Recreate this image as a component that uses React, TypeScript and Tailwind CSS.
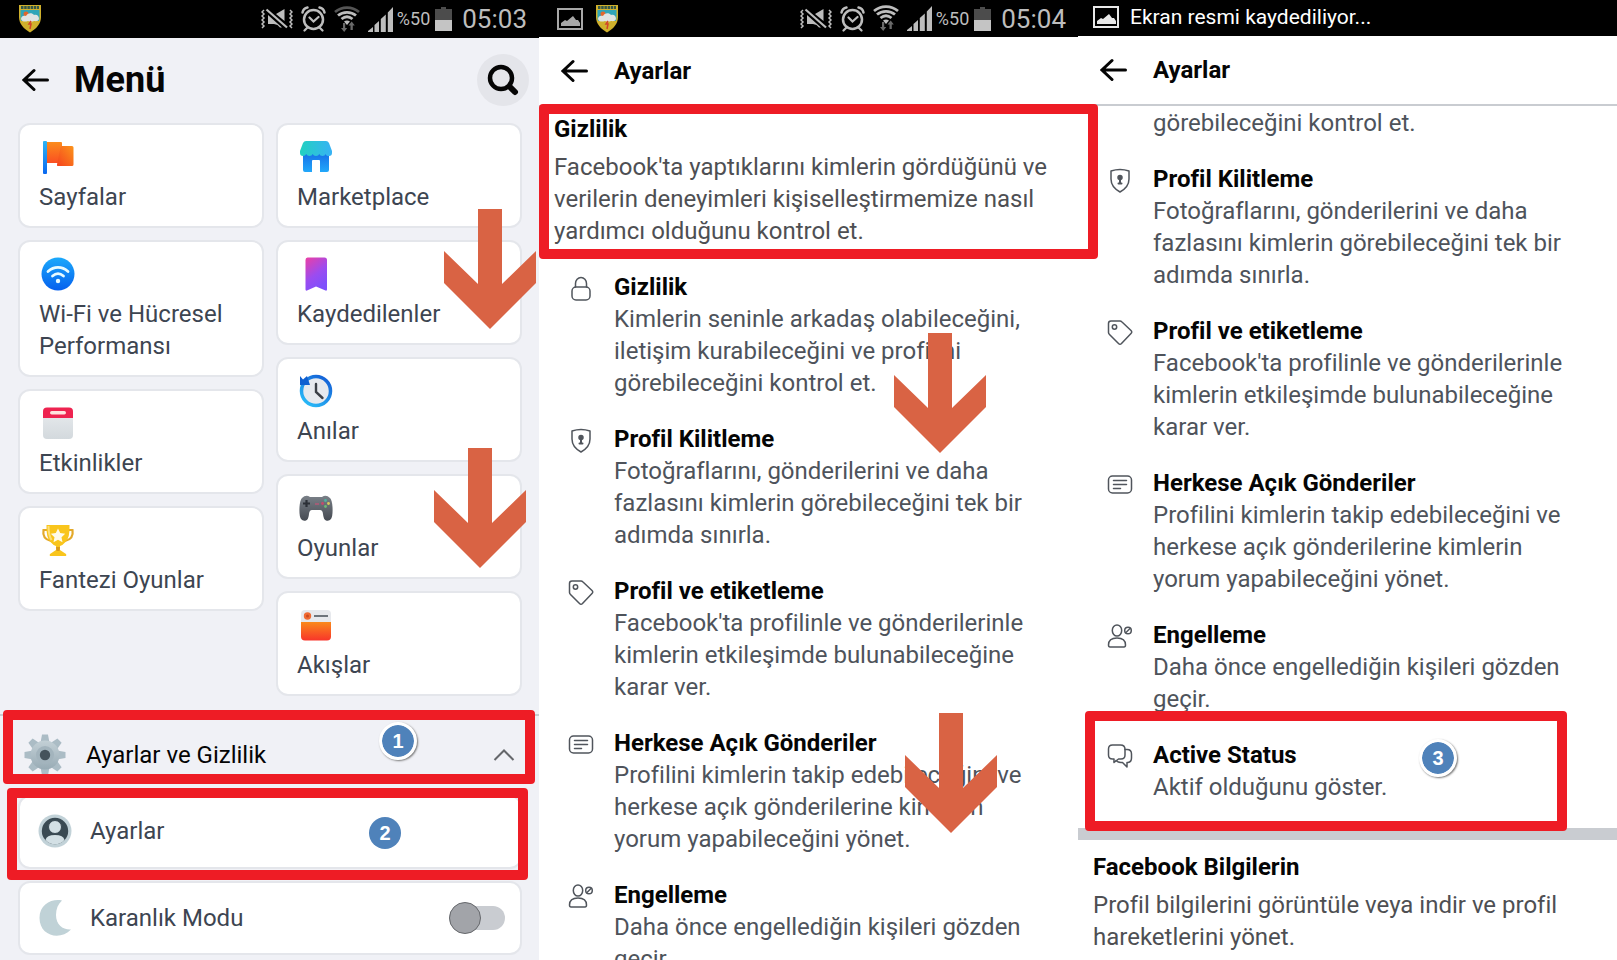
import type { ReactNode } from "react";

interface SettingItemProps {
  icon: ReactNode;
  title: string;
  text: string;
}

interface StatusBarProps {
  time: string;
  className: string;
  children?: ReactNode;
}

const ArrowLeftIcon = () => (
  <svg width="28" height="24" viewBox="0 0 28 24" fill="none" stroke="#050505" strokeWidth="3" strokeLinecap="round">
    <path d="M12 2.500 2 12l10 9.500M2.500 12H25.500" />
  </svg>
);

const ShieldLogo = () => (
  <svg width="24" height="28" viewBox="0 0 24 28">
    <path d="M1 0h22v12c0 7-5 12-11 15.500C6 24 1 19 1 12Z" fill="#cfb02c" />
    <path d="M2.500 5h19v8c0 1-.3 2-.7 3H3.200C2.700 15 2.500 14 2.500 13Z" fill="#2fa5b8" />
    <path d="M3 2.500h18" stroke="#33584a" strokeWidth="3" strokeDasharray="2.500 .7" />
    <circle cx="8" cy="9" r="2.500" fill="#e0662c" />
    <path d="M3 14c0-3 3-4 5-3 1-3 6-4 8-1 3-1 5 1 5 4-1 3-4 2-5 2-2 1-4 1-6 0-3 1-6 1-7-2Z" fill="#dfe3e2" />
    <path d="m13 16-2 3h2l-1 5" stroke="#d2432a" strokeWidth="1.500" fill="none" />
  </svg>
);

const PictureIcon = ({ color }: { color: string }) => (
  <svg width="26" height="22" viewBox="0 0 26 22">
    <path d="M1 1h24v20H1Z" fill="none" stroke={color} strokeWidth="2" />
    <path d="M4 18v-3l4-3 2 1 6-5 3 4h2l2 3v3Z" fill={color} />
  </svg>
);

const VibrateOffIcon = () => (
  <svg width="32" height="22" viewBox="0 0 32 22" fill="none" stroke="#bdbdbd">
    <path d="m3 2-2 2 2 2-2 2 2 2-2 2 2 2-2 2 2 2-2 2M29 2l2 2-2 2 2 2-2 2 2 2-2 2 2 2-2 2 2 2" strokeWidth="1.500" />
    <path d="M5.500 1.500 26 19.500" strokeWidth="2.200" />
    <path d="M15 6 23.500 1v12ZM7 7l14 12.500H19L16.500 17 13 16H7Z" fill="#bdbdbd" stroke="none" />
  </svg>
);

const AlarmIcon = () => (
  <svg width="25" height="26" viewBox="0 0 25 26" fill="none" stroke="#bdbdbd" strokeLinecap="round">
    <circle cx="12.500" cy="13.500" r="9.500" strokeWidth="2.500" />
    <path d="M1.500 6.500C2 4 4 2 6.500 1.500M23.500 6.500C23 4 21 2 18.500 1.500" strokeWidth="2.500" />
    <path d="m8.500 11.500 4 4 5-4.500M6 22l-2.500 2.500M19 22l2.500 2.500" strokeWidth="2.200" />
  </svg>
);

const WifiIcon = ({ weak }: { weak: boolean }) => (
  <svg width="26" height="27" viewBox="0 0 26 27" fill="none">
    <path d="M1 6C8 .2 18 .2 25 6" stroke={weak ? "#555555" : "#bdbdbd"} strokeWidth="2.800" />
    <path d="M4 9.500c5-4.300 13-4.300 18 0M7.500 13c3.500-2.800 7.500-2.800 11 0" stroke="#bdbdbd" strokeWidth="2.800" />
    <path d="M10 15.500c2-1.500 4-1.500 6 0L13 19Z" fill="#bdbdbd" />
    <path d="M9 17v5H7l3.200 4 3-4h-2v-5ZM16.500 24v-4.500h-2l3.200-4 3.100 4h-2V24Z" fill="#6a6a6a" />
  </svg>
);

const SignalIcon = () => (
  <svg width="25" height="25" viewBox="0 0 25 25" fill="#bdbdbd">
    <path d="M0 25v-1l5-4v5ZM6.500 25v-7l4.500-4v11ZM12.800 25V12l5-4.500V25ZM19.800 25V5.500L25 0v25Z" />
  </svg>
);

const BatteryIcon = () => (
  <svg width="17" height="24" viewBox="0 0 17 24">
    <path d="M6 0h5v2h6v11H0V2h6Z" fill="#4c4c4c" />
    <path d="M0 13h17v11H0Z" fill="#c4c4c4" />
  </svg>
);

const DownArrow = ({ className }: { className: string }) => (
  <svg className={`absolute z-20 ${className}`} width="92" height="120" viewBox="0 0 92 120">
    <path d="M34 0h24v75l34-33v32L46 120 0 74V42l34 33Z" fill="#d96344" />
  </svg>
);

const HighlightBox = ({ className }: { className: string }) => (
  <div className={`pointer-events-none absolute z-10 rounded-[4px] border-10 border-[#ee1c25] ${className}`} />
);

const StepBadge = ({ step, className }: { step: number; className: string }) => (
  <span
    className={`absolute z-20 flex size-[38px] items-center justify-center rounded-full border-3 font-['Liberation_Sans',sans-serif] text-xl font-bold text-white bg-[#4f82ba] bg-clip-padding ${className}`}
  >
    {step}
  </span>
);

const MenuIcon = ({ children }: { children: ReactNode }) => (
  <svg width="38" height="36" viewBox="1 0 38 36" fill="none">
    {children}
  </svg>
);

const FlagIcon = () => (
  <MenuIcon>
    <defs>
      <linearGradient id="flagA" x1="0" y1="0" x2="0" y2="1">
        <stop stopColor="#fb8c1c" />
        <stop offset="1" stopColor="#fa4f22" />
      </linearGradient>
      <linearGradient id="flagB" x1="0" y1="1" x2="1" y2="0">
        <stop stopColor="#f5421e" />
        <stop offset="1" stopColor="#fb941b" />
      </linearGradient>
      <linearGradient id="pole" x1="0" y1="0" x2="0" y2="1">
        <stop stopColor="#2cb5f5" />
        <stop offset="1" stopColor="#0a68f0" />
      </linearGradient>
    </defs>
    <path d="M8 3h15q1 0 1 1v20H8Z" fill="url(#flagA)" />
    <path d="M24 7h10q1.500 0 1.500 1.500v17q0 1.500-1.500 1.500H20q-1.500 0-1-1.500L22.500 8.500Q23 7 24 7Z" fill="url(#flagB)" />
    <rect x="5" y="2" width="4" height="33" rx="1" fill="url(#pole)" />
  </MenuIcon>
);

const MarketIcon = () => (
  <MenuIcon>
    <defs>
      <linearGradient id="roof" x1="0" y1="0" x2="1" y2="0">
        <stop stopColor="#22d1c0" />
        <stop offset="1" stopColor="#38b2f5" />
      </linearGradient>
      <linearGradient id="shop" x1="0" y1="0" x2="0" y2="1">
        <stop stopColor="#1772e8" />
        <stop offset="1" stopColor="#22a8fa" />
      </linearGradient>
    </defs>
    <path d="M7 15h26v16q0 2-2 2h-7V22q0-1-1-1h-6q-1 0-1 1v11H9q-2 0-2-2Z" fill="url(#shop)" />
    <path
      d="M10 2h20q2 0 3 2l3 8v2q0 3-3 3t-3.200-2q-.8 2-3.300 2t-3.200-2q-.8 2-3.300 2t-3.300-2q-.8 2-3.200 2T10.200 15q-.8 2-3.200 2-3 0-3-3v-2l3-8q1-2 3-2Z"
      fill="url(#roof)"
    />
  </MenuIcon>
);

const WifiCircleIcon = () => (
  <MenuIcon>
    <defs>
      <linearGradient id="wifiBg" x1="0" y1="0" x2="0" y2="1">
        <stop stopColor="#1ba9fb" />
        <stop offset="1" stopColor="#0560ee" />
      </linearGradient>
    </defs>
    <circle cx="20" cy="18" r="16.500" fill="url(#wifiBg)" />
    <path d="M10 15.500c6-5.500 14-5.500 20 0M14.500 20c3.500-3 7.500-3 11 0" stroke="#e8fbff" strokeWidth="2.800" strokeLinecap="round" />
    <circle cx="20" cy="25" r="2.200" fill="#e8fbff" />
  </MenuIcon>
);

const BookmarkIcon = () => (
  <MenuIcon>
    <defs>
      <linearGradient id="mark" x1="0" y1="0" x2=".5" y2="1">
        <stop stopColor="#ec3fa4" />
        <stop offset=".6" stopColor="#9b4cf0" />
        <stop offset="1" stopColor="#7f50fb" />
      </linearGradient>
    </defs>
    <path d="M11.500 1.500h17q2.500 0 2.500 2.500v29.500q0 1.500-1.500 1L20 30.500l-9 4q-1.500.5-1.500-1V4q0-2.500 2-2.500Z" fill="url(#mark)" />
  </MenuIcon>
);

const MemoriesIcon = () => (
  <MenuIcon>
    <defs>
      <linearGradient id="ring" x1="0" y1="1" x2=".7" y2="0">
        <stop stopColor="#2bc4fb" />
        <stop offset="1" stopColor="#1565d8" />
      </linearGradient>
    </defs>
    <circle cx="20" cy="18" r="14.500" fill="#e6e9ee" stroke="url(#ring)" strokeWidth="3.500" />
    <path d="m4 3 3 3.500L11 3l3 9H4Z" fill="#0f5fd0" />
    <path d="M20 11v8l6.500 6" stroke="#3b3f46" strokeWidth="2.400" strokeLinecap="round" />
  </MenuIcon>
);

const CalendarIcon = () => (
  <MenuIcon>
    <defs>
      <linearGradient id="sheet" x1="0" y1="0" x2="0" y2="1">
        <stop stopColor="#e9ecef" />
        <stop offset="1" stopColor="#d3d9dd" />
      </linearGradient>
    </defs>
    <rect x="5" y="3" width="30" height="31" rx="4" fill="url(#sheet)" />
    <path d="M9 2.500h22q4 0 4 4V13H5V6.500q0-4 4-4Z" fill="#ee2350" />
    <rect x="12" y="6" width="16" height="3.500" rx="1.700" fill="#ffe3df" />
  </MenuIcon>
);

const TrophyIcon = () => (
  <MenuIcon>
    <path d="M10 8H5.500Q4 17 13 19M30 8h4.500q1.500 9-7.500 11" stroke="#e3a92a" strokeWidth="2.200" strokeLinecap="round" />
    <path d="M8.500 3h23q.5 13-4 17-2.500 3-5.500 4v4l6 4q1 2-1 2H13q-2 0-1-2l6-4v-4q-3-1-5.500-4-4.500-4-4-17Z" fill="#f9c51c" />
    <path d="M18 25h4l-.5 4h-3Z" fill="#d99a1e" />
    <path d="M10.500 4q0 9 3 14" stroke="#fde07a" strokeWidth="2" />
    <path d="m20 6.500 2.200 4.600 5 .6-3.700 3.500 1 5-4.500-2.500-4.500 2.500 1-5-3.700-3.500 5-.6Z" fill="#fffbea" />
  </MenuIcon>
);

const GamepadIcon = () => (
  <MenuIcon>
    <defs>
      <linearGradient id="pad" x1="0" y1="0" x2="0" y2="1">
        <stop stopColor="#7a8088" />
        <stop offset="1" stopColor="#454a52" />
      </linearGradient>
    </defs>
    <path
      d="M6 8q4-4 8-1h12q4-3 8 1 2 2 2.500 9 .5 9-1.500 12-2 2.500-5 1.500-2.500-1-3-6.500-.4-4-3-4h-8q-2.600 0-3 4-.5 5.500-3 6.500-3 1-5-1.500-2-3-1.500-12Q4 10 6 8Z"
      fill="url(#pad)"
    />
    <path d="M10.500 10v7M7 13.500h7" stroke="#2c3037" strokeWidth="2.200" />
    <path d="M19 14h4" stroke="#c05578" strokeWidth="1.300" />
    <circle cx="29.500" cy="10.500" r="1.400" fill="#4fb3a0" />
    <circle cx="32.500" cy="13.500" r="1.400" fill="#d9ca5b" />
    <circle cx="29.500" cy="16.500" r="1.400" fill="#6cba74" />
    <circle cx="26.500" cy="13.500" r="1.400" fill="#c8496c" />
  </MenuIcon>
);

const FeedsIcon = () => (
  <MenuIcon>
    <defs>
      <linearGradient id="feed" x1="0" y1="0" x2="0" y2="1">
        <stop stopColor="#fa8a1c" />
        <stop offset="1" stopColor="#f8352a" />
      </linearGradient>
    </defs>
    <path d="M9 3h22q4 0 4 4v8H5V7q0-4 4-4Z" fill="#e7e9ed" />
    <path d="M5 15h30v14.500q0 4-4 4H9q-4 0-4-4Z" fill="url(#feed)" />
    <circle cx="11.500" cy="9" r="3.700" fill="#f06a32" />
    <circle cx="11.500" cy="9" r="1.500" fill="#c94a22" />
    <path d="M18 9h14" stroke="#6e757c" strokeWidth="2" />
  </MenuIcon>
);

const GearIcon = () => (
  <svg width="42" height="42" viewBox="-21 -21 42 42">
    <defs>
      <linearGradient id="gear" x1="0" y1="0" x2="0" y2="1">
        <stop stopColor="#c3d0d6" />
        <stop offset="1" stopColor="#98abb5" />
      </linearGradient>
    </defs>
    {[0, 45, 90, 135, 180, 225, 270, 315].map((angle) => (
      <path key={angle} d="M-4.500-12-3-20.500h6L4.500-12Z" fill="#abbcc5" transform={`rotate(${angle})`} />
    ))}
    <circle r="14.500" fill="url(#gear)" />
    <circle r="9" fill="#a3b4bd" />
    <circle r="5.200" fill="#45535c" />
  </svg>
);

const AccountIcon = () => (
  <svg width="34" height="34" viewBox="0 0 34 34">
    <circle cx="17" cy="17" r="16.500" fill="#c2d2d8" />
    <circle cx="17" cy="17" r="13.200" fill="#3a4a53" />
    <path d="M7.500 26q1-5 9.500-5t9.500 5q-4 4.300-9.500 4.300T7.500 26Z" fill="#d3e0e5" />
    <circle cx="17" cy="13" r="6.500" fill="#d3e0e5" stroke="#3a4a53" />
  </svg>
);

const MoonIcon = () => (
  <svg width="34" height="38" viewBox="0 0 34 38">
    <path d="M24 1.500C14-.5 1.500 5 1.500 19 1.500 37 22 42 33 30.500 25 31 18 26 18 16c0-6 2-11 6-14.500Z" fill="#c0d2d7" />
  </svg>
);

const LineIcon = ({ children }: { children: ReactNode }) => (
  <svg
    className="mt-[3px] shrink-0"
    width="28"
    height="28"
    viewBox="0 0 28 28"
    fill="none"
    stroke="#50555c"
    strokeWidth="1.500"
    strokeLinejoin="round"
    strokeLinecap="round"
  >
    {children}
  </svg>
);

const LockIcon = () => (
  <LineIcon>
    <rect x="5" y="13" width="18" height="13" rx="4" />
    <path d="M8.500 13V9.500a5.500 6 0 0 1 11 0V13" />
  </LineIcon>
);

const ShieldIcon = () => (
  <LineIcon>
    <path d="M5 5q9-3 18 0v8q0 8-9 13-9-5-9-13Z" />
    <circle cx="14" cy="11.500" r="2" fill="#50555c" />
    <path d="M14 12v5M12.500 17.500h3" strokeWidth="2" />
  </LineIcon>
);

const TagIcon = () => (
  <LineIcon>
    <path d="M2.500 5.500q0-2.500 2.500-2.500h9q1 0 2 1l9 8.500q1.500 1.500 0 3l-9.500 10q-1.500 1.500-3 0l-9-9q-1-1-1-2Z" />
    <circle cx="8.500" cy="9" r="2.200" />
  </LineIcon>
);

const PostIcon = () => (
  <LineIcon>
    <rect x="2.500" y="6" width="23" height="17" rx="4" />
    <path d="M7.500 10.500h13M7.500 14.500h13M7.500 18.500h7" />
  </LineIcon>
);

const BlockIcon = () => (
  <LineIcon>
    <ellipse cx="11" cy="8.500" rx="4.700" ry="5.500" />
    <path d="M4 25q-1.500 0-1.500-2 0-7 8.500-7t8.500 7q0 2-1.500 2Z" />
    <circle cx="22" cy="8.500" r="3.300" />
    <path d="m20 10.500 4-4" />
  </LineIcon>
);

const ChatIcon = () => (
  <LineIcon>
    <path d="M6.500 3h8q4.500 0 4.500 4.500V13q0 4-4 4h-2.500L8 20.500V17H6.500q-4 0-4-4V7q0-4 4-4Z" />
    <path d="M19 7.500h2q4.500 0 4.500 4.500v4q0 4-3.500 4.500h-1V25l-4.500-4.500H15q-3 0-5-2" />
  </LineIcon>
);

const StatusBar = ({ time, className, children }: StatusBarProps) => (
  <div className={`flex items-center bg-black text-[#bdbdbd] ${className}`}>
    <div className="flex flex-1 items-center gap-3">{children}</div>
    <div className="flex items-center gap-2">
      <VibrateOffIcon />
      <AlarmIcon />
      <WifiIcon weak={time === "05:03"} />
      <SignalIcon />
      <div className="-ml-1 flex items-center gap-[5px]">
        <span className="text-lg leading-none">%50</span>
        <BatteryIcon />
      </div>
      <span className="ml-0.5 text-[26px] leading-none">{time}</span>
    </div>
  </div>
);

const SettingsHeader = () => (
  <header className="flex h-[70px] items-center gap-[25px] border-b-2 border-[#c9ccd1] pb-px pl-[22px]">
    <button type="button" aria-label="Geri">
      <ArrowLeftIcon />
    </button>
    <h1 className="font-bold">Ayarlar</h1>
  </header>
);

const SettingItem = ({ icon, title, text }: SettingItemProps) => (
  <a href="#" className="flex gap-[19px] pr-9 pl-7">
    {icon}
    <div>
      <h3 className="font-bold">{title}</h3>
      <p className="text-[#4e535b]">{text}</p>
    </div>
  </a>
);

const MenuCard = ({ icon, label }: { icon: ReactNode; label: string }) => (
  <button
    type="button"
    className="flex w-full flex-col gap-1.5 rounded-xl border-2 border-[#e4e6eb] bg-white pt-3.5 pr-4 pb-[13px] pl-[19px] text-left text-[#3d4551]"
  >
    {icon}
    {label}
  </button>
);

const profileItems: SettingItemProps[] = [
  {
    icon: <ShieldIcon />,
    title: "Profil Kilitleme",
    text: "Fotoğraflarını, gönderilerini ve daha fazlasını kimlerin görebileceğini tek bir adımda sınırla.",
  },
  {
    icon: <TagIcon />,
    title: "Profil ve etiketleme",
    text: "Facebook'ta profilinle ve gönderilerinle kimlerin etkileşimde bulunabileceğine karar ver.",
  },
  {
    icon: <PostIcon />,
    title: "Herkese Açık Gönderiler",
    text: "Profilini kimlerin takip edebileceğini ve herkese açık gönderilerine kimlerin yorum yapabileceğini yönet.",
  },
  {
    icon: <BlockIcon />,
    title: "Engelleme",
    text: "Daha önce engellediğin kişileri gözden geçir.",
  },
];

function MenuScreen() {
  return (
    <section className="relative bg-[#f0f1f6]">
      <StatusBar time="05:03" className="h-[38px] pr-3 pl-[18px]">
        <ShieldLogo />
      </StatusBar>

      <header className="flex h-[85px] items-center pr-2.5 pb-0.5 pl-[22px]">
        <button type="button" aria-label="Geri">
          <ArrowLeftIcon />
        </button>
        <h1 className="ml-6 flex-1 text-4xl font-bold">Menü</h1>
        <button
          type="button"
          aria-label="Ara"
          className="flex size-[52px] items-center justify-center rounded-full bg-[#e4e5ea]"
        >
          <svg width="32" height="32" viewBox="0 0 32 32" fill="none" stroke="#050505" strokeLinecap="round">
            <circle cx="14" cy="14" r="11" strokeWidth="4.500" />
            <path d="m23 23 5 5" strokeWidth="6" />
          </svg>
        </button>
      </header>

      <div className="flex gap-3 pr-[17px] pb-[18px] pl-[18px]">
        <div className="flex flex-1 flex-col gap-3">
          <MenuCard icon={<FlagIcon />} label="Sayfalar" />
          <MenuCard icon={<WifiCircleIcon />} label="Wi-Fi ve Hücresel Performansı" />
          <MenuCard icon={<CalendarIcon />} label="Etkinlikler" />
          <MenuCard icon={<TrophyIcon />} label="Fantezi Oyunlar" />
        </div>
        <div className="flex flex-1 flex-col gap-3">
          <MenuCard icon={<MarketIcon />} label="Marketplace" />
          <MenuCard icon={<BookmarkIcon />} label="Kaydedilenler" />
          <MenuCard icon={<MemoriesIcon />} label="Anılar" />
          <MenuCard icon={<GamepadIcon />} label="Oyunlar" />
          <MenuCard icon={<FeedsIcon />} label="Akışlar" />
        </div>
      </div>

      <div className="relative border-t-2 border-[#c9ccd1]">
        <button type="button" className="flex h-[79px] w-full items-center gap-5 px-6 pb-0.5 text-left">
          <GearIcon />
          <span className="flex-1">Ayarlar ve Gizlilik</span>
          <svg width="22" height="12" viewBox="0 0 22 12" fill="none" stroke="#65676b" strokeWidth="2">
            <path d="m1.500 11 9.500-9.500 9.500 9.500" />
          </svg>
        </button>
        <HighlightBox className="-top-1.5 right-1 left-[3px] h-[74px]" />
        <StepBadge step={1} className="top-1.5 left-[379px] border-white shadow-[1px_1px_2px_#777]" />
      </div>

      <div className="flex flex-col gap-3 pr-[17px] pl-[18px]">
        <div className="relative">
          <button
            type="button"
            className="flex h-[74px] w-full items-center gap-[18px] rounded-xl border-2 border-[#e4e6eb] bg-white px-[18px] pb-0.5 text-[#3d4551]"
          >
            <AccountIcon />
            Ayarlar
          </button>
          <HighlightBox className="-top-[7px] -right-1.5 -bottom-[11px] -left-[11px]" />
          <StepBadge step={2} className="top-[19px] left-[348px] border-transparent" />
        </div>
        <label className="flex h-[74px] items-center gap-[18px] rounded-xl border-2 border-[#e4e6eb] bg-white pr-[15px] pl-[18px] text-[#3d4551]">
          <MoonIcon />
          <span className="flex-1">Karanlık Modu</span>
          <span className="relative flex h-8 w-14 items-center">
            <input type="checkbox" role="switch" className="peer h-6 w-full appearance-none rounded-full bg-[#c9ccd1]" />
            <span className="absolute left-0 size-8 rounded-full border border-[#66686c] bg-[#a2a4a9] peer-checked:left-6" />
          </span>
        </label>
      </div>

      <DownArrow className="top-[209px] left-[444px]" />
      <DownArrow className="top-[448px] left-[434px]" />
    </section>
  );
}

function PrivacyScreen() {
  return (
    <section className="relative">
      <StatusBar time="05:04" className="h-[37px] pr-3 pl-[18px]">
        <PictureIcon color="#a8a8a8" />
        <ShieldLogo />
      </StatusBar>
      <SettingsHeader />

      <div className="relative pt-1.5 pr-4 pl-[15px]">
        <h2 className="mb-1.5 font-bold">Gizlilik</h2>
        <p className="text-[#4e4f53]">
          Facebook'ta yaptıklarını kimlerin gördüğünü ve verilerin deneyimleri kişiselleştirmemize nasıl yardımcı
          olduğunu kontrol et.
        </p>
        <HighlightBox className="-top-[3px] -right-5 -bottom-3 left-0" />
      </div>

      <div className="mt-6 flex flex-col gap-6">
        <SettingItem
          icon={<LockIcon />}
          title="Gizlilik"
          text="Kimlerin seninle arkadaş olabileceğini, iletişim kurabileceğini ve profilini görebileceğini kontrol et."
        />
        {profileItems.map((item) => (
          <SettingItem key={item.title} {...item} />
        ))}
      </div>

      <DownArrow className="top-[333px] left-[355px]" />
      <DownArrow className="top-[713px] left-[366px]" />
    </section>
  );
}

function ActiveStatusScreen() {
  return (
    <section>
      <div className="flex h-9 items-center gap-[11px] bg-black pb-0.5 pl-[15px] text-[21px] text-white">
        <PictureIcon color="#e8e8e8" />
        Ekran resmi kaydediliyor...
      </div>
      <SettingsHeader />

      <div className="mt-px flex flex-col gap-6">
        <p className="pl-[75px] text-[#4e535b]">görebileceğini kontrol et.</p>
        {profileItems.map((item) => (
          <SettingItem key={item.title} {...item} />
        ))}
        <div className="relative">
          <SettingItem icon={<ChatIcon />} title="Active Status" text="Aktif olduğunu göster." />
          <HighlightBox className="-top-7 right-[50px] -bottom-7 left-[7px]" />
          <StepBadge step={3} className="top-0 left-[341px] border-white shadow-[1px_1px_2px_#777]" />
        </div>
      </div>

      <div className="mt-[25px] h-3 bg-[#c9ccd1]" />

      <div className="pt-[11px] pr-8 pl-[15px]">
        <h2 className="mb-1.5 font-bold">Facebook Bilgilerin</h2>
        <p className="text-[#4e4f53]">Profil bilgilerini görüntüle veya indir ve profil hareketlerini yönet.</p>
      </div>
    </section>
  );
}

export default function App() {
  return (
    <main className="grid h-screen grid-cols-3 overflow-hidden bg-white font-[Roboto,sans-serif] text-2xl text-[#050505] [font-variant-ligatures:none]">
      <MenuScreen />
      <PrivacyScreen />
      <ActiveStatusScreen />
    </main>
  );
}
